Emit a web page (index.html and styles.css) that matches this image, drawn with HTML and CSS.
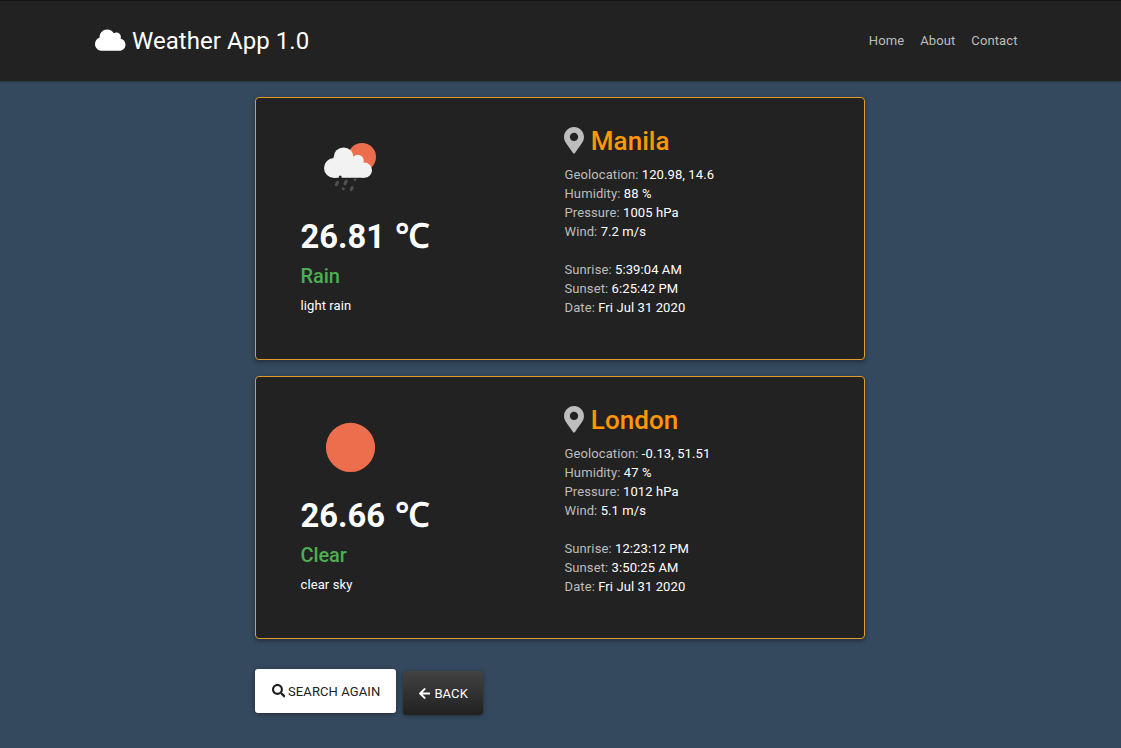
FILE: index.html
```html
<!DOCTYPE html>
<html lang="en">
<head>
<meta charset="utf-8">
<title>Weather App 1.0</title>
<link rel="stylesheet" href="styles.css">
</head>
<body>
<nav class="navbar">
  <a class="brand"><svg class="icon-cloud" viewBox="0 0 640 512"><path d="M537.6 226.6c4.1-10.7 6.4-22.4 6.4-34.6 0-53-43-96-96-96-19.7 0-38.1 6-53.3 16.2C367 64.2 315.3 32 256 32c-88.4 0-160 71.6-160 160 0 2.7.1 5.4.2 8.1C40.2 219.8 0 273.2 0 336c0 79.5 64.5 144 144 144h368c70.7 0 128-57.3 128-128 0-61.9-44-113.6-102.4-125.4z"/></svg><span>Weather App 1.0</span></a>
  <div class="links"><a>Home</a><a>About</a><a>Contact</a></div>
</nav>
<main class="container">
  <section class="card">
    <div class="summary">
      <svg class="weather" viewBox="0 0 100 100">
        <circle cx="62" cy="39" r="14" fill="#ec6e4c"/>
        <g fill="#f2f2f2"><circle cx="43.6" cy="39.4" r="10"/><circle cx="34" cy="50" r="10"/><circle cx="57.8" cy="42.8" r="6"/><circle cx="64.4" cy="52.2" r="7.6"/><path d="M34 45l10-9 12 5 8 7v11.8H34z"/></g>
        <circle cx="40.2" cy="59" r="1.5" fill="#222"/>
        <g stroke="#505050" stroke-width="3" stroke-linecap="round"><path d="M37.6 64.3l-1.2 2.6M46.3 63l-1.3 2.8M55.1 61.7v.1M43.3 70.7v.1M52.2 69.6l-1 2.1"/></g>
      </svg>
      <h1>26.81 <span class="unit">℃</span></h1>
      <h4>Rain</h4>
      <p>light rain</p>
    </div>
    <div class="details">
      <h2><svg class="icon-pin" viewBox="0 0 384 512"><path d="M172.268 501.67C26.97 291.031 0 269.413 0 192 0 85.961 85.961 0 192 0s192 85.961 192 192c0 77.413-26.97 99.031-172.268 309.67-9.535 13.774-29.93 13.773-39.464 0zM192 272c44.183 0 80-35.817 80-80s-35.817-80-80-80-80 35.817-80 80 35.817 80 80 80z"/></svg><span>Manila</span></h2>
      <ul>
        <li>Geolocation: <b>120.98, 14.6</b></li>
        <li>Humidity: <b>88 %</b></li>
        <li>Pressure: <b>1005 hPa</b></li>
        <li>Wind: <b>7.2 m/s</b></li>
      </ul>
      <ul>
        <li>Sunrise: <b>5:39:04 AM</b></li>
        <li>Sunset: <b>6:25:42 PM</b></li>
        <li>Date: <b>Fri Jul 31 2020</b></li>
      </ul>
    </div>
  </section>
  <section class="card">
    <div class="summary">
      <svg class="weather" viewBox="0 0 100 100"><circle cx="50.5" cy="50.4" r="24.6" fill="#ec6e4c"/></svg>
      <h1>26.66 <span class="unit">℃</span></h1>
      <h4>Clear</h4>
      <p>clear sky</p>
    </div>
    <div class="details">
      <h2><svg class="icon-pin" viewBox="0 0 384 512"><path d="M172.268 501.67C26.97 291.031 0 269.413 0 192 0 85.961 85.961 0 192 0s192 85.961 192 192c0 77.413-26.97 99.031-172.268 309.67-9.535 13.774-29.93 13.773-39.464 0zM192 272c44.183 0 80-35.817 80-80s-35.817-80-80-80-80 35.817-80 80 35.817 80 80 80z"/></svg><span>London</span></h2>
      <ul>
        <li>Geolocation: <b>-0.13, 51.51</b></li>
        <li>Humidity: <b>47 %</b></li>
        <li>Pressure: <b>1012 hPa</b></li>
        <li>Wind: <b>5.1 m/s</b></li>
      </ul>
      <ul>
        <li>Sunrise: <b>12:23:12 PM</b></li>
        <li>Sunset: <b>3:50:25 AM</b></li>
        <li>Date: <b>Fri Jul 31 2020</b></li>
      </ul>
    </div>
  </section>
  <div class="actions">
    <a class="btn btn-light"><svg class="icon-search" viewBox="0 0 512 512"><path d="M505 442.7L405.3 343c-4.5-4.5-10.6-7-17-7H372c27.6-35.3 44-79.7 44-128C416 93.1 322.9 0 208 0S0 93.1 0 208s93.1 208 208 208c48.3 0 92.7-16.4 128-44v16.3c0 6.4 2.5 12.5 7 17l99.7 99.7c9.4 9.4 24.6 9.4 33.9 0l28.3-28.3c9.4-9.4 9.4-24.6.1-34zM208 336c-70.7 0-128-57.2-128-128 0-70.7 57.2-128 128-128 70.7 0 128 57.2 128 128 0 70.7-57.2 128-128 128z"/></svg><span>SEARCH AGAIN</span></a>
    <a class="btn btn-dark"><svg class="icon-arrow" viewBox="0 0 448 512"><path d="M257.5 445.1l-22.2 22.2c-9.4 9.4-24.6 9.4-33.9 0L7 273c-9.4-9.4-9.4-24.6 0-33.9L201.4 44.7c9.4-9.4 24.6-9.4 33.9 0l22.2 22.2c9.5 9.5 9.3 25-.4 34.3L136.6 216H424c13.3 0 24 10.7 24 24v32c0 13.3-10.7 24-24 24H136.6l120.5 114.8c9.8 9.3 10 24.8.4 34.3z"/></svg><span>BACK</span></a>
  </div>
</main>
</body>
</html>
```
FILE: styles.css
```css
* { box-sizing: border-box; }
body {
  margin: 0;
  height: 748px;
  overflow: hidden;
  background: #34495e;
  color: #fff;
  font: 13px/19px Roboto, sans-serif;
  letter-spacing: 0.1px;
}
h1, h2, h4, p, ul { margin: 0; padding: 0; }
svg { display: block; fill: currentColor; flex: none; }

.navbar {
  height: 81px;
  padding: 0 103.5px 0 95.4px;
  display: flex;
  align-items: center;
  justify-content: space-between;
  background: #222;
  border-top: 1px solid #121212;
  box-shadow: 0 1px 2px rgba(0, 0, 0, .3);
}
.brand {
  display: flex;
  align-items: center;
  gap: 6px;
  font-size: 24px;
  line-height: 36px;
  letter-spacing: 0.06px;
}
.icon-cloud { width: 30.5px; height: 24.4px; margin-bottom: 1px; }
.links { display: flex; gap: 16px; padding-bottom: 2px; color: #bdbdbd; }

.container { width: 610px; margin: 16px 0 0 255px; }
.card {
  height: 263px;
  margin-bottom: 16px;
  display: flex;
  background: #222;
  border: 1px solid #e49a2c;
  border-radius: 4px;
  box-shadow: 0 2px 4px rgba(0, 0, 0, .35);
}
.summary { width: 308.5px; padding: 20px 0 0 44.5px; }
.weather { width: 100px; height: 100px; margin-left: -0.5px; }
.summary h1 { margin-top: -1px; height: 41px; font-size: 32.7px; line-height: 40px; font-weight: 700; letter-spacing: 0; }
.unit { font-family: "Noto Sans", sans-serif; font-size: 35px; font-weight: 600; line-height: 1; margin-left: 1.5px; }
.summary h4 { margin-top: 6px; font-size: 20px; line-height: 24px; font-weight: 500; color: #4caf50; letter-spacing: -0.1px; }
.summary p { margin-top: 8px; }

.details { padding-top: 27px; }
.details h2 {
  display: flex;
  align-items: center;
  gap: 6.5px;
  height: 32px;
  margin-bottom: 8px;
  color: #ff9800;
  font-size: 26px;
  line-height: 32px;
  font-weight: 500;
  letter-spacing: 0.05px;
}
.icon-pin { width: 20px; height: 26.5px; margin: 0 0.3px 1px -0.5px; color: #bdbdbd; }
.details ul { list-style: none; margin-bottom: 19px; color: #bdbdbd; }
.details b { font-weight: 400; color: #fff; }

.actions { display: flex; gap: 7px; padding-top: 14px; }
.btn {
  height: 44px;
  display: flex;
  align-items: center;
  border-radius: 3px;
  padding: 0 16px;
  white-space: nowrap;
  box-shadow: 0 1px 4px rgba(0, 0, 0, .4);
}
.btn-light { width: 141px; gap: 3px; background: #fff; color: #212121; }
.btn-dark { width: 80px; gap: 4px; margin-top: 2px; background: linear-gradient(#424242, #212121); }
.icon-search { width: 13.5px; height: 13.5px; margin-left: 0.5px; }
.icon-arrow { width: 11.4px; height: 13px; }
```
